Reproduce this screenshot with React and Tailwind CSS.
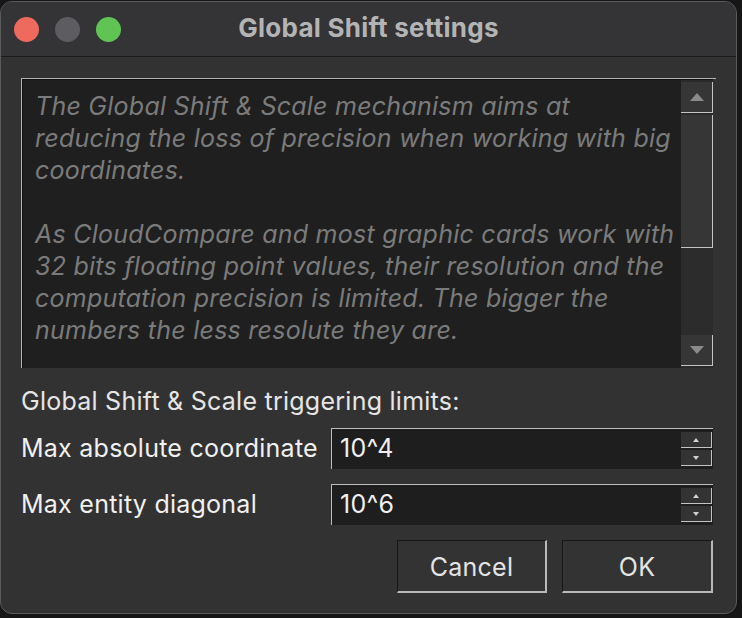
import React from 'react';

const font = { fontFamily: 'Inter, "Liberation Sans", Arial, sans-serif' };

const ScrollButton = ({ up }) => (
  <div className="h-[31px] bg-[#363636] border-r border-b border-[#c4c4c4] flex items-center justify-center">
    <svg width="14" height="8" viewBox="0 0 14 8">
      {up ? <path d="M0 8 L7 0 L14 8 Z" fill="#8a8a8a" /> : <path d="M0 0 L7 8 L14 0 Z" fill="#8a8a8a" />}
    </svg>
  </div>
);

const SpinBox = ({ value }) => (
  <div className="flex-1 h-[41px] bg-[#1e1e1e] border-t border-l border-[#bdbdbd] flex items-center">
    <span className="flex-1 pl-[8px] text-[25px] tracking-[0.01em] text-[#f0f0f0]">{value}</span>
    <div className="w-[31px] mr-[1px] flex flex-col gap-[2px]">
      <div className="h-[16px] bg-[#333333] border-r border-b border-[#c4c4c4] flex items-center justify-center">
        <svg width="6" height="4" viewBox="0 0 6 4"><path d="M0 4 L3 0 L6 4 Z" fill="#d0d0d0" /></svg>
      </div>
      <div className="h-[16px] bg-[#333333] border-r border-b border-[#c4c4c4] flex items-center justify-center">
        <svg width="6" height="4" viewBox="0 0 6 4"><path d="M0 0 L3 4 L6 0 Z" fill="#d0d0d0" /></svg>
      </div>
    </div>
  </div>
);

export default function App() {
  return (
    <div className="w-[742px] h-[618px] bg-[#161616] overflow-hidden" style={font}>
      <div className="w-[737px] h-[613px] mt-[1px] rounded-[12px] bg-[#323232] border border-[#5a5a5a] flex flex-col overflow-hidden">
        {/* title bar */}
        <div className="h-[55px] shrink-0 bg-[#343336] border-b border-[#1b1b1b] flex items-center relative">
          <div className="flex gap-[16px] pl-[13px]">
            <div className="w-[25px] h-[25px] rounded-full bg-[#ee6a5f]" />
            <div className="w-[25px] h-[25px] rounded-full bg-[#5d5c60]" />
            <div className="w-[25px] h-[25px] rounded-full bg-[#5fc454]" />
          </div>
          <div className="absolute inset-0 pb-[3px] flex items-center justify-center text-[26px] font-bold tracking-[0.01em] text-[#b4b4b4]">
            Global Shift settings
          </div>
        </div>

        <div className="flex-1 flex flex-col px-[20px] pt-[21px]">
          {/* description */}
          <div className="h-[290px] w-[695px] border-t border-l border-[#b4b4b4] flex">
            <div className="flex-1 flex border-t border-l border-[#111111] bg-[#1f1f1f]">
              <div className="flex-1 pl-[12px] pt-[10px] text-[25px] leading-[32px] tracking-[0.01em] italic text-[#7b7b7b] whitespace-nowrap overflow-hidden">
                <p>The Global Shift &amp; Scale mechanism aims at<br />reducing the loss of precision when working with big<br />coordinates.</p>
                <p className="mt-[32px]">As CloudCompare and most graphic cards work with<br />32 bits floating point values, their resolution and the<br />computation precision is limited. The bigger the<br />numbers the less resolute they are.</p>
              </div>
              <div className="w-[32px] bg-[#2a2a2a] flex flex-col pt-[2px] pb-[2px]">
                <ScrollButton up />
                <div className="h-[133px] mt-[2px] bg-[#363636] border-r border-b border-[#c4c4c4]" />
                <div className="flex-1 bg-[#2c2c2c]" />
                <ScrollButton />
              </div>
            </div>
            <div className="w-[3px]" />
          </div>

          <div className="mt-[20px] text-[25px] tracking-[0.01em] text-[#e6e6e6] leading-[26px]">Global Shift &amp; Scale triggering limits:</div>

          <div className="mt-[14px] flex items-center">
            <span className="w-[310px] text-[25px] tracking-[0.01em] text-[#f0f0f0]">Max absolute coordinate</span>
            <div className="w-[382px] flex"><SpinBox value="10^4" /></div>
          </div>
          <div className="mt-[15px] flex items-center">
            <span className="w-[310px] text-[25px] tracking-[0.01em] text-[#f0f0f0]">Max entity diagonal</span>
            <div className="w-[382px] flex"><SpinBox value="10^6" /></div>
          </div>

          <div className="mt-[15px] flex justify-end gap-[15px] pr-[3px]">
            <button className="w-[150px] h-[53px] pt-[3px] bg-[#333333] border-t border-l border-[#161616] border-r-2 border-b-2 border-r-[#b9b9b9] border-b-[#b9b9b9] text-[25px] tracking-[0.01em] text-[#e4e4e4]">Cancel</button>
            <button className="w-[151px] h-[53px] pt-[3px] bg-[#333333] border-t border-l border-[#161616] border-r-2 border-b-2 border-r-[#b9b9b9] border-b-[#b9b9b9] text-[25px] tracking-[0.01em] text-[#e4e4e4]">OK</button>
          </div>
        </div>
      </div>
    </div>
  );
}
